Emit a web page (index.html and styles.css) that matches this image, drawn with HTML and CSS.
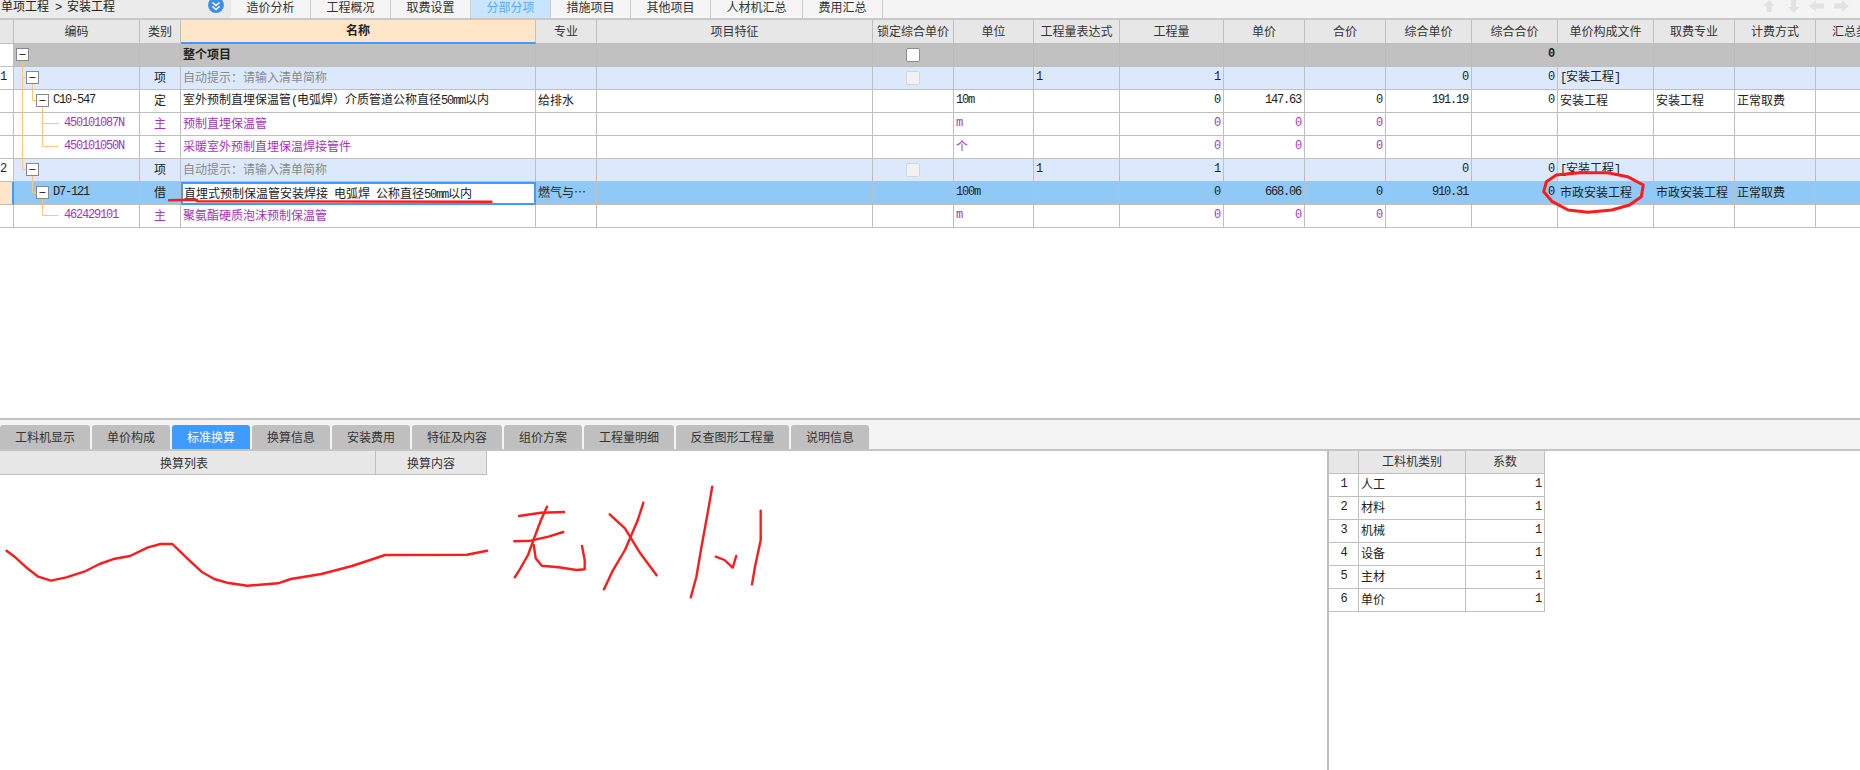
FILE: index.html
```html
<!DOCTYPE html>
<html lang="zh-CN">
<head>
    <meta charset="UTF-8">
    <title>分部分项</title>
    <link rel="stylesheet" href="styles.css">
</head>
<body>
<div class="page">
    <div class="topbar">
        <div class="crumb">
            <span>单项工程<span class="lat"> &gt; </span>安装工程</span>
            <svg class="collapse" width="16" height="14" viewBox="0 0 16 14">
                <circle cx="8" cy="5" r="8" fill="#3f8fe8"/>
                <path d="M4.5 2.5 8 5.5 11.5 2.5M4.5 6.5 8 9.5 11.5 6.5" fill="none" stroke="#fff" stroke-width="1.6"/>
            </svg>
        </div>
        <div class="toptab">造价分析</div>
        <div class="toptab">工程概况</div>
        <div class="toptab">取费设置</div>
        <div class="toptab on">分部分项</div>
        <div class="toptab">措施项目</div>
        <div class="toptab">其他项目</div>
        <div class="toptab wide">人材机汇总</div>
        <div class="toptab">费用汇总</div>
        <svg class="arrows" width="86" height="18" viewBox="0 0 86 18">
            <path d="M6 0 12 6H8.500V12H3.500V6H0Z"/>
            <path d="M28 0H33V7H36.500L30.500 13 25 7H28Z"/>
            <path d="M46 6 53 0.500V3.500H61V8.500H53V11.500Z"/>
            <path d="M86 6 79 0.500V3.500H71V8.500H79V11.500Z"/>
        </svg>
    </div>

    <div class="sheet">
        <table class="grid">
            <colgroup>
                <col class="w14"><col class="w126"><col class="w41"><col class="w355"><col class="w61"><col class="w276">
                <col class="w81"><col class="w80"><col class="w86"><col class="w104"><col class="w81"><col class="w81">
                <col class="w86"><col class="w86"><col class="w96"><col class="w81"><col class="w81"><col class="w81">
            </colgroup>
            <tr class="head">
                <th></th><th>编码</th><th>类别</th><th class="cur">名称</th><th>专业</th><th>项目特征</th>
                <th>锁定综合单价</th><th>单位</th><th>工程量表达式</th><th>工程量</th><th>单价</th><th>合价</th>
                <th>综合单价</th><th>综合合价</th><th>单价构成文件</th><th>取费专业</th><th>计费方式</th><th>汇总类别</th>
            </tr>
            <tr class="total">
                <td class="no"></td><td></td><td></td><td>整个项目</td><td></td><td></td>
                <td class="c"><span class="check"></span></td><td></td><td></td><td></td><td></td><td></td>
                <td></td><td class="n lat">0</td><td></td><td></td><td></td><td></td>
            </tr>
            <tr class="bill">
                <td class="no lat">1</td><td></td><td class="c">项</td><td class="hint">自动提示：请输入清单简称</td><td></td><td></td>
                <td class="c"><span class="check off"></span></td><td></td><td class="lat">1</td><td class="n lat">1</td><td></td><td></td>
                <td class="n lat">0</td><td class="n lat">0</td><td><span class="lat">[</span>安装工程<span class="lat">]</span></td><td></td><td></td><td></td>
            </tr>
            <tr>
                <td class="no"></td><td class="lat lv2">C10-547</td><td class="c">定</td><td>室外预制直埋保温管<span class="lat">(</span>电弧焊）介质管道公称直径<span class="lat">50mm</span>以内</td><td>给排水</td><td></td>
                <td></td><td class="lat">10m</td><td></td><td class="n lat">0</td><td class="n lat">147.63</td><td class="n lat">0</td>
                <td class="n lat">191.19</td><td class="n lat">0</td><td>安装工程</td><td>安装工程</td><td>正常取费</td><td></td>
            </tr>
            <tr class="main">
                <td class="no"></td><td class="lat lv3">450101087N</td><td class="c">主</td><td>预制直埋保温管</td><td></td><td></td>
                <td></td><td class="lat">m</td><td></td><td class="n lat">0</td><td class="n lat">0</td><td class="n lat">0</td>
                <td></td><td></td><td></td><td></td><td></td><td></td>
            </tr>
            <tr class="main">
                <td class="no"></td><td class="lat lv3">450101050N</td><td class="c">主</td><td>采暖室外预制直埋保温焊接管件</td><td></td><td></td>
                <td></td><td>个</td><td></td><td class="n lat">0</td><td class="n lat">0</td><td class="n lat">0</td>
                <td></td><td></td><td></td><td></td><td></td><td></td>
            </tr>
            <tr class="bill">
                <td class="no lat">2</td><td></td><td class="c">项</td><td class="hint">自动提示：请输入清单简称</td><td></td><td></td>
                <td class="c"><span class="check off"></span></td><td></td><td class="lat">1</td><td class="n lat">1</td><td></td><td></td>
                <td class="n lat">0</td><td class="n lat">0</td><td><span class="lat">[</span>安装工程<span class="lat">]</span></td><td></td><td></td><td></td>
            </tr>
            <tr class="sel">
                <td class="no"></td><td class="lat lv2">D7-121</td><td class="c">借</td><td class="edit">直埋式预制保温管安装焊接&ensp;电弧焊&ensp;公称直径<span class="lat">50mm</span>以内</td><td>燃气与…</td><td></td>
                <td></td><td class="lat">100m</td><td></td><td class="n lat">0</td><td class="n lat">668.06</td><td class="n lat">0</td>
                <td class="n lat">910.31</td><td class="n lat">0</td><td>市政安装工程</td><td>市政安装工程</td><td>正常取费</td><td></td>
            </tr>
            <tr class="main">
                <td class="no"></td><td class="lat lv3">462429101</td><td class="c">主</td><td>聚氨酯硬质泡沫预制保温管</td><td></td><td></td>
                <td></td><td class="lat">m</td><td></td><td class="n lat">0</td><td class="n lat">0</td><td class="n lat">0</td>
                <td></td><td></td><td></td><td></td><td></td><td></td>
            </tr>
        </table>

        <!-- tree lines, y is measured from the top of the sheet -->
        <svg class="tree" width="140" height="210" viewBox="0 0 140 210">
            <defs>
                <g id="box">
                    <rect x="0" y="0" width="12" height="12" fill="#fff" stroke="#888"/>
                    <path d="M3 6H9" stroke="#333"/>
                </g>
            </defs>
            <path class="link" d="M22.500 40V149.500M22.500 57.500H26.500M22.500 149.500H26.500M32.500 64V80.500H36.500M32.500 156V172.500H36.500M42.500 87V126.500H58.500M42.500 103.500H58.500M42.500 179V195.500H58.500"/>
            <use href="#box" x="16.500" y="28.500"/>
            <use href="#box" x="26.500" y="51.500"/>
            <use href="#box" x="36.500" y="74.500"/>
            <use href="#box" x="26.500" y="143.500"/>
            <use href="#box" x="36.500" y="166.500"/>
        </svg>
    </div>

    <div class="lowertabs">
        <div class="ltab wide">工料机显示</div>
        <div class="ltab">单价构成</div>
        <div class="ltab on">标准换算</div>
        <div class="ltab">换算信息</div>
        <div class="ltab">安装费用</div>
        <div class="ltab wide">特征及内容</div>
        <div class="ltab">组价方案</div>
        <div class="ltab wide">工程量明细</div>
        <div class="ltab wider">反查图形工程量</div>
        <div class="ltab">说明信息</div>
    </div>

    <div class="lower">
        <div class="listpane">
            <div class="listhead">
                <div class="lh1">换算列表</div>
                <div class="lh2">换算内容</div>
            </div>
        </div>
        <div class="ratepane">
            <table class="rates">
                <colgroup><col class="w30"><col class="w107"><col class="w79"></colgroup>
                <tr class="head"><th></th><th>工料机类别</th><th>系数</th></tr>
                <tr><td class="c lat">1</td><td>人工</td><td class="n lat">1</td></tr>
                <tr><td class="c lat">2</td><td>材料</td><td class="n lat">1</td></tr>
                <tr><td class="c lat">3</td><td>机械</td><td class="n lat">1</td></tr>
                <tr><td class="c lat">4</td><td>设备</td><td class="n lat">1</td></tr>
                <tr><td class="c lat">5</td><td>主材</td><td class="n lat">1</td></tr>
                <tr><td class="c lat">6</td><td>单价</td><td class="n lat">1</td></tr>
            </table>
        </div>
    </div>

    <!-- red pen marks somebody drew over the screenshot -->
    <svg class="ink" width="1860" height="770" viewBox="0 0 1860 770">
        <path d="M169 200.300 197 199.700M197 201.300 491.500 201.700"/>
        <path class="thick" d="M1643.300 185 1641.300 196.700 1629.500 205 1611.700 210 1588 212.300 1568.200 210 1552.400 201.700 1543.700 191.700 1546.400 181.700 1556.300 175 1580 172.700 1607.700 172.700 1627.500 176.700 1643.300 185Z"/>
        <path d="M6.600 550.700 15.300 557.300 25.500 566.700 38.300 576.700 51 580.700 66.300 577.300 84.200 571.700 99.500 564 114.800 558.700 130 556 148 547.300 160.700 544 172.400 544 186.200 557.300 201.500 571.700 214.300 579 227 582.700 247.400 585.700 278 583.300 290.800 579 321.400 574 352 566 385.200 555 466.800 554.700 487.200 550.700"/>
        <path d="M519 516 541 512.700 564 512"/>
        <path d="M547 506.700 541 520 534.700 536.700 528 555 520.400 568.300 514.800 577.300"/>
        <path d="M514.300 541.300 530.600 540.700 548.500 536.700 563.300 532"/>
        <path d="M533.700 545 535.700 558.300 541.800 565.700 558.700 567.300 576.500 570 584.700 569.300 584.700 560 582 546"/>
        <path d="M609.700 514.300 625 528.300 640.300 553.300 656.600 575.300"/>
        <path d="M643.400 502.700 637.800 520 625 550 612.200 571.700 604 589.300"/>
        <path d="M712.200 486.700 708.200 510 701.500 546.700 696.400 576.700 690.800 597.300"/>
        <path d="M715.800 556.700 724.500 560 732.700 567.700 736.200 556"/>
        <path d="M760.700 510.700 760.700 540 755 566.700 752 584.300"/>
    </svg>
</div>
</body>
</html>
```

FILE: styles.css
```css
*{
    padding: 0;
    margin: 0;
    box-sizing: border-box;
}
body{
    background: #fff;
    font-family: "Noto Sans CJK SC", sans-serif;
    font-size: 12px;
    color: #222;
    overflow: hidden;
}
.page{
    position: relative;
    width: 1860px;
    height: 770px;
    overflow: hidden;
    display: flex;
    flex-direction: column;
}
/* latin text is half a character wide next to the chinese */
.lat{
    font-family: "Liberation Mono", monospace;
    font-size: 12px;
    letter-spacing: -1.2px;
    white-space: pre;
}

/* top bar */
.topbar{
    display: flex;
    height: 20px;
    background: #f4f4f4;
    border-bottom: 2px solid #c8c8c8;
    flex: none;
}
.crumb{
    display: flex;
    justify-content: space-between;
    width: 231px;
    padding-left: 1px;
    padding-right: 7px;
    background: #ebebeb;
    line-height: 12px;
    overflow: hidden;
}
.collapse{
    flex: none;
}
.toptab{
    width: 80px;
    line-height: 14px;
    text-align: center;
    background: #f5f5f5;
    border-right: 1px solid #cdcdcd;
    color: #333;
}
.toptab.wide{
    width: 92px;
}
.toptab.on{
    background: #c9e5fd;
    color: #5aa9f0;
}
.arrows{
    margin-left: auto;
    margin-right: 11px;
    fill: #e2e2e2;
}

/* main sheet */
.sheet{
    position: relative;
    height: 400px;
    flex: none;
    border-bottom: 2px solid #c4c4c4;
    overflow: hidden;
}
table{
    border-collapse: separate;
    border-spacing: 0;
    table-layout: fixed;
}
.grid{
    width: 1897px;
}
.w14{width: 14px;}
.w30{width: 30px;}
.w41{width: 41px;}
.w61{width: 61px;}
.w79{width: 79px;}
.w80{width: 80px;}
.w81{width: 81px;}
.w86{width: 86px;}
.w96{width: 96px;}
.w104{width: 104px;}
.w107{width: 107px;}
.w126{width: 126px;}
.w276{width: 276px;}
.w355{width: 355px;}

th, td{
    height: 23px;
    padding: 0 2px 2px 2px;
    border-right: 1px solid #bfbfbf;
    border-bottom: 1px solid #bfbfbf;
    white-space: nowrap;
    overflow: hidden;
    font-weight: normal;
    line-height: 16px;
    text-align: left;
}
th{
    background: #e7e7e7;
    text-align: center;
    color: #333;
}
.grid .head th{
    height: 24px;
}
.grid th.cur{
    background: #ffe6c8;
    font-weight: bold;
    color: #222;
    border-bottom: 2px solid #3f9bff;
}
td.c{
    text-align: center;
}
td.n{
    text-align: right;
    padding-right: 3px;
}
td.no{
    padding: 0 0 2px 0;
    background: #fff;
}
.lv2{
    padding-left: 39px;
}
.lv3{
    padding-left: 50px;
}

.total td{
    background: #c1c1c1;
    font-weight: bold;
    border-right-color: #bbb;
}
.total td.no{
    background: #fff;
}
.bill td{
    background: #dce9fd;
}
.bill td.no{
    background: #fff;
}
.hint{
    color: #8a8a8a;
}
.main td{
    color: #a335bd;
}
.sel td{
    background: #90c8f6;
}
.sel td.no{
    background: #ffe6c8;
    border-right: 2px solid #3f9bff;
}
.sel td.edit{
    background: #fff;
    border: 2px solid #3f9bff;
    padding: 0 1px;
}

.check{
    display: inline-block;
    width: 14px;
    height: 14px;
    background: #fff;
    border: 1px solid #8c8c8c;
    border-radius: 2px;
    vertical-align: middle;
}
.check.off{
    background: #f1f1f1;
    border-color: #d6d6d6;
}

.tree{
    position: absolute;
    left: 0;
    top: 0;
}
.link{
    fill: none;
    stroke: #ffc67a;
}

/* lower tabs */
.lowertabs{
    display: flex;
    gap: 2px;
    height: 31px;
    padding-top: 5px;
    flex: none;
    background: #f4f4f4;
    border-bottom: 2px solid #c4c4c4;
}
.ltab{
    width: 78px;
    background: #bfbfbf;
    border-radius: 3px 3px 0 0;
    line-height: 24px;
    text-align: center;
    color: #333;
}
.ltab.wide{
    width: 90px;
}
.ltab.wider{
    width: 113px;
}
.ltab.on{
    background: #3f9bff;
    color: #fff;
}

/* lower panes */
.lower{
    display: flex;
    flex: 1;
}
.listpane{
    width: 1327px;
}
.listhead{
    display: flex;
    width: 487px;
    height: 24px;
    background: #e7e7e7;
    border-bottom: 1px solid #bfbfbf;
    line-height: 23px;
    text-align: center;
    color: #333;
}
.lh1{
    width: 376px;
    padding-right: 7px;
    border-right: 1px solid #bfbfbf;
}
.lh2{
    width: 111px;
    border-right: 1px solid #bfbfbf;
}
.ratepane{
    flex: 1;
    border-left: 2px solid #bfbfbf;
}
.rates{
    width: 216px;
}

/* pen marks */
.ink{
    position: absolute;
    left: 0;
    top: 0;
    fill: none;
    stroke: #fb1c1c;
    stroke-width: 2.4;
    stroke-linejoin: round;
    stroke-linecap: round;
    pointer-events: none;
}
.ink .thick{
    stroke-width: 3;
}
```
